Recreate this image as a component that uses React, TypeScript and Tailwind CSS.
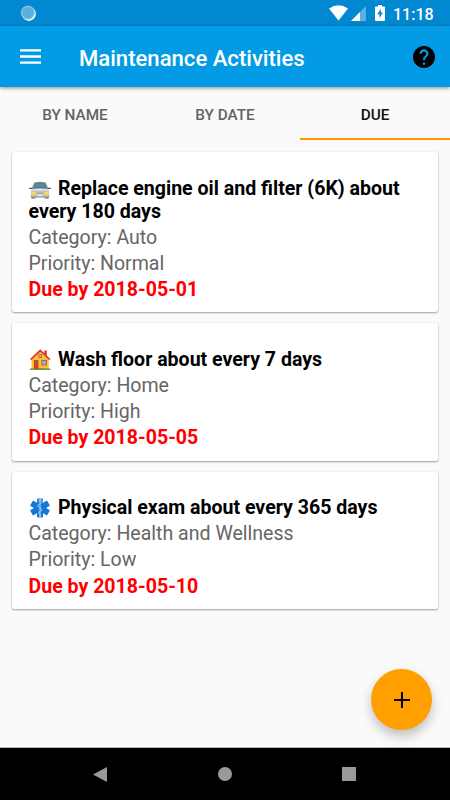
import type { ReactNode } from 'react'

interface Activity {
  id: string
  icon: ReactNode
  title: string
  category: string
  priority: string
  due: string
}

function CarIcon() {
  return (
    <svg viewBox="0 0 22 22" className="h-[22px] w-[22px]">
      <path d="M2.4 18h4v2.4h-4zM15.6 18h4v2.4h-4z" fill="#5c5c5c" />
      <path d="M5.2 4.4Q11 3.2 16.8 4.400L19.4 11H2.6z" fill="#8d9396" />
      <path d="M5.9 5.4Q11 4.3 16.1 5.4l2 5.500H3.900z" fill="#4d7890" />
      <path d="M6.4 6.2Q11 5.1 15.6 6.2l.7 2.2H5.7z" fill="#64889b" />
      <path d="M.3 9.800h3v1.300h-3zM18.700 9.800h3v1.300h-3z" fill="#49565c" />
      <path d="M3.3 10.800Q11 9.800 18.700 10.800q1.800 1.800 1.600 4.100v4.600H1.700v-4.600q-.2-2.300 1.600-4.100z" fill="#c4c4c4" />
      <path d="M3.8 11.1Q11 10.2 18.2 11.1l1 1.6H2.8z" fill="#dedede" />
      <path d="M2.2 13.8l4.4.3-.4 2.300h-4zM19.800 13.800l-4.400.3.4 2.300h4z" fill="#f8e92e" />
      <path d="M7.600 14.200h6.800l-.5 1.600H8.100z" fill="#b0b0b0" />
      <path d="M2 18.400h18v1H2z" fill="#929292" />
      <path d="M8.500 16.800h5v1.400h-5z" fill="#ececec" />
    </svg>
  )
}

function HouseIcon() {
  return (
    <svg viewBox="0 0 22 22" className="h-[22px] w-[22px]">
      <path d="M15.2 1.4h2.6v6h-2.6z" fill="#d84336" />
      <path d="M2.5 9.600L11.200 1.600l8.500 8v10.600H2.500z" fill="#fcc22d" />
      <path d="M1 19.600q10-1.100 20.400 0V21H1z" fill="#6b9d36" />
      <path d="M11.200.3L1 10l1 1.200 9.200-8.400 9.200 8.400 1-1.200z" fill="#e3372c" />
      <path d="M5 11.200h4.400v8.600H5z" fill="#b8322b" />
      <path d="M5.700 11.900h3v7.600h-3z" fill="#d74134" />
      <path d="M12.400 11h5.600v5.400h-5.600z" fill="#d84336" />
      <path d="M13.200 11.800h4v3.800h-4z" fill="#71b7e8" />
      <path d="M9.400 5.200h3.600v3.600H9.400z" fill="#d84336" />
      <path d="M10.100 5.900h2.200v2.200h-2.200z" fill="#81c0e9" />
    </svg>
  )
}

function MedicalIcon() {
  return (
    <svg viewBox="0 0 22 22" className="h-[22px] w-[22px]">
      <g fill="#1976d2">
        <rect x="8" y="1.5" width="6" height="19" rx="1" />
        <rect x="8" y="1.2" width="6" height="19.6" rx="1" transform="rotate(60 11 11)" />
        <rect x="8" y="1.2" width="6" height="19.6" rx="1" transform="rotate(120 11 11)" />
      </g>
      <path d="M11 .6v20.8" stroke="#b3e5fc" strokeWidth="1" />
      <path
        d="M9 4.2q4-2.7 4.3.3c0 2.4-4.6 2.4-4.6 4.4s4.2 1.8 4.2 3.7-3.4 1.5-3.4 3.2 2.5 1.3 2.2 2.6-1.7.8-1.7 1.5"
        fill="none"
        stroke="#a5d8ef"
        strokeWidth=".9"
      />
    </svg>
  )
}

const activities: Activity[] = [
  {
    id: 'oil',
    icon: <CarIcon />,
    title: 'Replace engine oil and filter (6K) about every 180 days',
    category: 'Auto',
    priority: 'Normal',
    due: '2018-05-01',
  },
  {
    id: 'floor',
    icon: <HouseIcon />,
    title: 'Wash floor about every 7 days',
    category: 'Home',
    priority: 'High',
    due: '2018-05-05',
  },
  {
    id: 'exam',
    icon: <MedicalIcon />,
    title: 'Physical exam about every 365 days',
    category: 'Health and Wellness',
    priority: 'Low',
    due: '2018-05-10',
  },
]

function StatusBar() {
  return (
    <div className="flex h-[26px] shrink-0 items-center bg-[#0288d1] pr-[17px] pl-[20px] text-white">
      <svg viewBox="0 0 16 16" className="h-4 w-4">
        <circle cx="8.8" cy="8.8" r="7.1" fill="#fff" />
        <circle cx="7.8" cy="7.6" r="7" fill="#5aafe0" />
        <circle cx="7.8" cy="7.7" r="6.2" fill="none" stroke="#a6d5ef" strokeWidth="1.3" strokeDasharray="1 1" />
      </svg>
      <svg viewBox="0 0 19 16" className="ml-auto h-4 w-[19px]">
        <path d="M0 3.4Q9.5-2.8 19 3.4L9.5 15.5z" fill="currentColor" />
      </svg>
      <svg viewBox="0 0 15 15" className="mt-px ml-[3px] h-[15px] w-[15px]">
        <path d="M15 0v15H0z" fill="currentColor" opacity=".35" />
        <path d="M9 6v9H0z" fill="currentColor" />
      </svg>
      <svg viewBox="0 0 10 16" className="ml-[9px] h-4 w-[10px]">
        <path d="M3 0h4v1.5h2q1 0 1 1V15q0 1-1 1H1q-1 0-1-1V2.5q0-1 1-1h2z" fill="currentColor" />
        <path d="M5.8 3.7L2.3 9.2h2.2v4l3.4-5.6H5.8z" fill="#0288d1" />
      </svg>
      <span className="ml-[8px] w-[40px] pt-[3px] text-[16px] leading-6 font-medium whitespace-nowrap">11:18</span>
    </div>
  )
}

function AppBar() {
  return (
    <header className="relative flex h-[61px] shrink-0 items-center bg-[#039be5] pr-[15px] pl-[20px] shadow-[0_1px_4px_rgba(0,0,0,0.45)]">
      <button type="button" aria-label="Menu">
        <svg viewBox="0 0 21 15" className="h-[15px] w-[21px]">
          <path d="M0 1.3h21M0 7.5h21M0 13.7h21" stroke="#fff" strokeWidth="2.3" />
        </svg>
      </button>
      <h1 className="ml-[38px] pt-[2px] text-[22.1px] leading-7 font-medium whitespace-nowrap text-white">
        Maintenance Activities
      </h1>
      <button type="button" aria-label="Help" className="ml-auto">
        <svg viewBox="2 2 20 20" className="h-[22px] w-[22px]">
          <path d="M12 2C6.48 2 2 6.48 2 12s4.48 10 10 10 10-4.48 10-10S17.52 2 12 2zm1 17h-2v-2h2v2zm2.07-7.75l-.9.92C13.45 12.9 13 13.5 13 15h-2v-.5c0-1.1.45-2.1 1.17-2.83l1.24-1.26c.37-.36.59-.86.59-1.41 0-1.1-.9-2-2-2s-2 .9-2 2H8c0-2.21 1.79-4 4-4s4 1.79 4 4c0 .88-.36 1.68-.93 2.25z" />
        </svg>
      </button>
    </header>
  )
}

function Tabs() {
  return (
    <nav className="grid h-[53px] shrink-0 grid-cols-3 text-[15.3px] font-medium text-[#636363]">
      <button type="button" className="border-b-2 border-transparent pt-[5px]">BY NAME</button>
      <button type="button" className="border-b-2 border-transparent pt-[5px]">BY DATE</button>
      <button type="button" className="border-b-2 border-[#ff9800] pt-[5px] text-[#111]">DUE</button>
    </nav>
  )
}

function ActivityCard({ activity }: { activity: Activity }) {
  return (
    <article className="rounded-[2px] bg-white pt-[24.6px] pr-[17px] pb-[9px] pl-[16.5px] text-[19.56px] leading-[26.3px] text-[#666] shadow-[0_1px_2px_rgba(0,0,0,0.35),0_0_1px_rgba(0,0,0,0.2)]">
      <h2 className="mb-[2px] leading-[23px] font-bold text-black">
        <span className="mr-[6.5px] inline-block h-[18px] w-[23px] align-[-1px]">{activity.icon}</span>
        {activity.title}
      </h2>
      <p>Category: {activity.category}</p>
      <p>Priority: {activity.priority}</p>
      <p className="font-bold text-[#f00]">Due by {activity.due}</p>
    </article>
  )
}

export default function App() {
  return (
    <div className="relative flex h-[800px] w-[450px] flex-col overflow-hidden bg-[#fafafa] font-['Roboto',sans-serif]">
      <StatusBar />
      <AppBar />
      <Tabs />
      <main className="flex flex-1 flex-col gap-[10.8px] px-3 pt-3">
        {activities.map(a => (
          <ActivityCard key={a.id} activity={a} />
        ))}
      </main>

      <button
        type="button"
        aria-label="Add activity"
        className="absolute right-[18px] bottom-[70px] flex h-[61px] w-[61px] items-center justify-center rounded-full bg-[#ffa000] shadow-[0_6px_12px_rgba(0,0,0,0.24)]"
      >
        <svg viewBox="0 0 16 16" className="h-4 w-4">
          <path d="M8 0v16M0 8h16" stroke="#000" strokeWidth="2" />
        </svg>
      </button>

      <footer className="flex h-[53px] shrink-0 items-center justify-between border-t border-[#b5b5b5] bg-black pr-[94px] pl-[93px]">
        <svg viewBox="0 0 14 15" className="h-[15px] w-[14px]">
          <path d="M14 0v15L0 7.5z" fill="#999" />
        </svg>
        <div className="h-[14px] w-[14px] rounded-full bg-[#999]" />
        <div className="h-[14px] w-[14px] bg-[#999]" />
      </footer>
    </div>
  )
}
